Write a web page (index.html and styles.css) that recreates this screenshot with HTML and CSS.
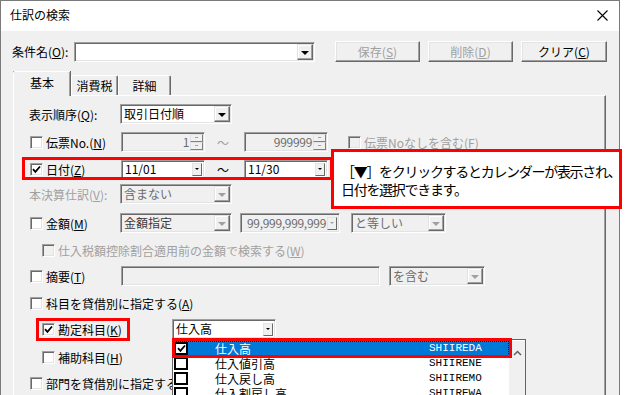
FILE: index.html
```html
<!DOCTYPE html>
<html lang="ja">
<head>
<meta charset="utf-8">
<title>仕訳の検索</title>
<link rel="stylesheet" href="styles.css">
</head>
<body>
<div class="stage">
  <div class="window">
    <div class="titlebar">
      <span class="title">仕訳の検索</span>
      <svg class="close" width="11" height="11" viewBox="0 0 11 11"><path d="M0.5 0.5 L10.5 10.5 M10.5 0.5 L0.5 10.5" stroke="#000" stroke-width="1.1" fill="none"/></svg>
    </div>
    <div class="client">
      <div class="toprow">
        <span class="cond">条件名(<u>O</u>):</span>
        <div class="sel combo"><span class="val"></span><span class="dd"><i class="tri"></i></span></div>
        <button class="btn dis first">保存(<u>S</u>)</button>
        <button class="btn dis">削除(<u>D</u>)</button>
        <button class="btn">クリア(<u>C</u>)</button>
      </div>
      <div class="tabs">
        <div class="tab active">基本</div>
        <div class="tab tab-tax">消費税</div>
        <div class="tab tab-detail">詳細</div>
      </div>
      <div class="panel">
        <div class="row r1">
          <div class="lbl">表示順序(<u>Q</u>):</div>
          <div class="sel w112"><span class="val">取引日付順</span><span class="dd"><i class="tri"></i></span></div>
        </div>
        <div class="row r2">
          <div class="lbl"><span class="cb"></span><span class="cbt">伝票No.(<u>N</u>)</span></div>
          <div class="fld dis w84 ml1"><span class="num">1</span><span class="spin"><i></i><i></i></span></div>
          <div class="tilde dis-t">～</div>
          <div class="fld dis w84"><span class="num">999999</span><span class="spin"><i></i><i></i></span></div>
          <div class="cbwrap ml19"><span class="cb dis"></span><span class="cbt dis-t">伝票Noなしを含む(<u>F</u>)</span></div>
        </div>
        <div class="row r3">
          <div class="lbl"><span class="cb"><svg width="9" height="9" viewBox="0 0 9 9"><path d="M1 4.2 L3.4 6.8 L8 1.5" stroke="#000" stroke-width="1.8" fill="none"/></svg></span><span class="cbt">日付(<u>Z</u>)</span></div>
          <div class="fld date w84 ml1"><span class="val">11/01</span><span class="sdd"><i class="stri"></i></span></div>
          <div class="tilde">～</div>
          <div class="fld date w84"><span class="val">11/30</span><span class="sdd"><i class="stri"></i></span></div>
        </div>
        <div class="row r4">
          <div class="lbl dis-t">本決算仕訳(<u>V</u>):</div>
          <div class="sel dis w112"><span class="val">含まない</span><span class="dd"><i class="tri"></i></span></div>
        </div>
        <div class="row r5">
          <div class="lbl"><span class="cb"></span><span class="cbt">金額(<u>M</u>)</span></div>
          <div class="sel dis w112"><span class="val dark">金額指定</span><span class="dd"><i class="tri"></i></span></div>
          <div class="fld dis w100 ml8"><span class="num">99,999,999,999</span><span class="sdd"><i class="stri"></i></span></div>
          <div class="sel dis w95 ml11"><span class="val">と等しい</span><span class="dd"><i class="tri"></i></span></div>
        </div>
        <div class="row r6">
          <div class="cbwrap ind"><span class="cb dis"></span><span class="cbt dis-t">仕入税額控除割合適用前の金額で検索する(<u>W</u>)</span></div>
        </div>
        <div class="row r7">
          <div class="lbl"><span class="cb"></span><span class="cbt">摘要(<u>T</u>)</span></div>
          <div class="fld dis w259 ml1"></div>
          <div class="sel dis w96 ml9"><span class="val">を含む</span><span class="dd"><i class="tri"></i></span></div>
        </div>
        <div class="row r8">
          <div class="cbwrap"><span class="cb"></span><span class="cbt">科目を貸借別に指定する(<u>A</u>)</span></div>
        </div>
        <div class="row r9">
          <div class="lbl lbl-wide ind"><span class="cb"><svg width="9" height="9" viewBox="0 0 9 9"><path d="M1 4.2 L3.4 6.8 L8 1.5" stroke="#000" stroke-width="1.8" fill="none"/></svg></span><span class="cbt">勘定科目(<u>K</u>)</span></div>
          <div class="fld acct w104"><span class="val">仕入高</span><span class="sdd"><i class="stri"></i></span></div>
        </div>
        <div class="row r10">
          <div class="cbwrap ind"><span class="cb"></span><span class="cbt">補助科目(<u>H</u>)</span></div>
        </div>
        <div class="row r11">
          <div class="cbwrap"><span class="cb"></span><span class="cbt">部門を貸借別に指定する(<u>B</u>)</span></div>
        </div>
      </div>
    </div>
  </div>

  <div class="hl hl-tab"></div>
  <div class="hl hl-date"></div>
  <div class="callout">
    <p>［▼］をクリックするとカレンダーが表示され、</p>
    <p>日付を選択できます。</p>
  </div>
  <div class="hl hl-acct"></div>

  <div class="droplist">
    <div class="items">
      <div class="item selected"><span class="lcb"><svg width="9" height="9" viewBox="0 0 9 9"><path d="M1 4.2 L3.4 6.8 L8 1.5" stroke="#000" stroke-width="1.8" fill="none"/></svg></span><span class="iname">仕入高</span><span class="icode">SHIIREDA</span></div>
      <div class="item"><span class="lcb"></span><span class="iname">仕入値引高</span><span class="icode">SHIIRENE</span></div>
      <div class="item"><span class="lcb"></span><span class="iname">仕入戻し高</span><span class="icode">SHIIREMO</span></div>
      <div class="item"><span class="lcb"></span><span class="iname">仕入割戻し高</span><span class="icode">SHIIREWA</span></div>
    </div>
    <div class="vscroll"><svg width="9" height="6" viewBox="0 0 9 6"><path d="M1 5 L4.5 1.5 L8 5" stroke="#606060" stroke-width="1.5" fill="none"/></svg></div>
  </div>
  <div class="hl hl-row"></div>
</div>
</body>
</html>
```

FILE: styles.css
```css
* { box-sizing: border-box; }
html, body { margin: 0; padding: 0; }
body {
  width: 627px;
  height: 395px;
  overflow: hidden;
  background: #fff;
  font-family: "Noto Sans CJK JP", "Noto Sans", sans-serif;
  font-size: 12px;
  color: #000;
}
u { text-decoration: underline; text-underline-offset: 1px; }
p { margin: 0; }

.stage { position: relative; width: 627px; height: 395px; overflow: hidden; }

.window {
  width: 620px;
  height: 400px;
  border: 1px solid #7a7a7a;
  background: #f0f0f0;
}

.titlebar {
  height: 30px;
  background: #fff;
  display: flex;
  align-items: center;
  justify-content: space-between;
  padding: 0 11px 2px 9px;
}
.title { line-height: 14px; }
.close { display: block; }

.client { padding: 10px 0 0 11px; }

.toprow { display: flex; align-items: center; height: 21px; }
.cond { width: 62px; white-space: nowrap; }

.btn {
  font: inherit;
  height: 21px;
  width: 85px;
  margin: 0 0 0 8px;
  padding: 0;
  background: #f0f0f0;
  border: 1px solid;
  border-color: #fff #696969 #696969 #fff;
  box-shadow: inset -1px -1px 0 #a0a0a0, inset 1px 1px 0 #e3e3e3;
  color: #000;
  line-height: 17px;
}
.btn.first { margin-left: 20px; }
.btn.dis { color: #a0a0a0; }
.btn:last-child { width: 86px; }

/* sunken edit / select boxes */
.sel, .fld {
  display: flex;
  align-items: center;
  height: 20px;
  background: #fff;
  border: 1px solid;
  border-color: #a0a0a0 #fff #fff #a0a0a0;
  box-shadow: inset 1px 1px 0 #696969, inset -1px -1px 0 #e3e3e3;
  padding: 1px 1px 1px 3px;
  flex: none;
}
.sel.dis, .fld.dis { background: #f0f0f0; }
.combo { width: 241px; margin-top: 1px; }
.val { flex: 1; white-space: nowrap; overflow: hidden; line-height: 16px; }
.sel.dis .val { color: #6d6d6d; }
.sel.dis .val.dark { color: #3a3a3a; }
.num { flex: 1; text-align: right; color: #6d6d6d; white-space: nowrap; line-height: 16px; padding-right: 1px; letter-spacing: -0.3px; }

.dd {
  width: 16px;
  height: 16px;
  flex: none;
  display: flex;
  align-items: center;
  justify-content: center;
  background: #f0f0f0;
  border: 1px solid;
  border-color: #e3e3e3 #696969 #696969 #e3e3e3;
  box-shadow: inset -1px -1px 0 #a0a0a0, inset 1px 1px 0 #fff;
}
.tri {
  display: block;
  width: 0; height: 0;
  border-left: 4px solid transparent;
  border-right: 4px solid transparent;
  border-top: 4px solid #000;
  margin-top: 1px;
}
.sel.dis .tri { border-top-color: #a0a0a0; }

.sdd {
  width: 10px;
  height: 13px;
  flex: none;
  display: flex;
  align-items: center;
  justify-content: center;
  background: #f0f0f0;
  border: 1px solid;
  border-color: #e3e3e3 #696969 #696969 #e3e3e3;
  margin-right: 1px;
}
.stri {
  display: block;
  width: 0; height: 0;
  border-left: 2px solid transparent;
  border-right: 2px solid transparent;
  border-top: 2px solid #000;
}
.fld.dis .stri { border-top-color: #a0a0a0; }

.spin {
  width: 13px;
  height: 16px;
  flex: none;
  display: flex;
  flex-direction: column;
}
.spin i {
  flex: 1;
  display: flex;
  background: #f0f0f0;
  border: 1px solid;
  border-color: #e3e3e3 #808080 #808080 #e3e3e3;
  position: relative;
}
.spin i::after {
  content: "";
  position: absolute;
  left: 4px; top: 2px;
  width: 3px; height: 1px;
  background: #a0a0a0;
}

.date { height: 19px; }
.acct { height: 20px; }

.w84 { width: 84px; }
.w100 { width: 100px; }
.w95 { width: 95px; }
.w96 { width: 96px; }
.w104 { width: 104px; }
.w112 { width: 112px; }
.w259 { width: 259px; }
.ml1 { margin-left: 1px; }
.ml8 { margin-left: 8px; }
.ml9 { margin-left: 9px; }
.ml11 { margin-left: 11px; }
.ml19 { margin-left: 19px; }

/* tabs */
.tabs {
  display: flex;
  align-items: flex-end;
  height: 25px;
  margin: 9px 0 -1px 1px;
  position: relative;
  z-index: 1;
}
.tab {
  height: 20px;
  margin-bottom: 1px;
  border-top: 1px solid #fff;
  border-left: 1px solid #fff;
  border-right: 1px solid #696969;
  box-shadow: inset -1px 0 0 #a0a0a0;
  border-radius: 2px 2px 0 0;
  background: #f0f0f0;
  display: flex;
  justify-content: center;
  align-items: center;
  padding-bottom: 1px;
}
.tab.active { width: 58px; height: 25px; margin-bottom: 0; padding-bottom: 4px; }
.tab-tax { width: 47px; }
.tab-detail { width: 53px; }

.panel {
  margin-left: 1px;
  width: 593px;
  height: 310px;
  border-top: 1px solid #fff;
  border-left: 1px solid #fff;
  border-right: 1px solid #696969;
  box-shadow: inset -1px 0 0 #a0a0a0;
  padding: 8px 0 0 15px;
}

.row { display: flex; align-items: center; height: 20px; }
.r2 { margin-top: 8px; }
.r3 { margin-top: 7px; }
.r4 { margin-top: 5px; }
.r5 { margin-top: 9px; }
.r6 { margin-top: 7px; }
.r7 { margin-top: 6px; }
.r8 { margin-top: 7px; }
.r9 { margin-top: 6px; }
.r10 { margin-top: 8px; }
.r11 { margin-top: 6px; }

.lbl { width: 91px; flex: none; display: flex; align-items: center; white-space: nowrap; }
.lbl-wide { width: 143px; }
.cbwrap { display: flex; align-items: center; white-space: nowrap; }
.ind { padding-left: 12px; }

.cb {
  width: 13px;
  height: 13px;
  flex: none;
  margin-left: 1px;
  background: #fff;
  border: 1px solid;
  border-color: #a0a0a0 #fff #fff #a0a0a0;
  box-shadow: inset 1px 1px 0 #696969, inset -1px -1px 0 #e3e3e3;
  display: flex;
  align-items: center;
  justify-content: center;
}
.cb svg { display: block; }
.cb.dis { background: #f0f0f0; }
.cbt { margin-left: 3px; }
.dis-t { color: #a0a0a0; }

.tilde { width: 39px; flex: none; text-align: center; padding-right: 3px; }

/* annotations */
.hl { position: absolute; border: 3px solid #f00; }
.hl-tab { left: 13px; top: 71px; width: 58px; height: 24px; }
.hl-date { left: 22px; top: 157px; width: 311px; height: 23px; }
.hl-acct { left: 36px; top: 318px; width: 94px; height: 23px; }
.hl-row { left: 172px; top: 338px; width: 340px; height: 20px; }

.callout {
  position: absolute;
  left: 331px;
  top: 149px;
  width: 291px;
  height: 60px;
  background: #fff;
  border: 3px solid #f00;
  padding: 10px 0 0 7px;
  font-size: 14px;
  line-height: 18px;
  letter-spacing: -1.3px;
  white-space: nowrap;
}

/* dropdown list */
.droplist {
  position: absolute;
  left: 172px;
  top: 339px;
  width: 354px;
  height: 70px;
  border: 1px solid #646464;
  background: #fff;
  display: flex;
  padding-top: 1px;
}
.items { width: 336px; flex: none; }
.item { height: 15px; display: flex; align-items: center; padding-left: 1px; overflow: hidden; }
.item.selected {
  background: #0078d7;
  color: #fff;
  outline: 1px dotted #000;
  outline-offset: -1px;
}
.lcb {
  width: 14px;
  height: 13px;
  flex: none;
  border: 2px solid #000;
  background: #fff;
  display: flex;
  align-items: center;
  justify-content: center;
}
.iname { width: 241px; flex: none; padding-left: 27px; white-space: nowrap; line-height: 15px; }
.icode { font-family: "Liberation Mono", "DejaVu Sans Mono", monospace; font-size: 11px; line-height: 15px; }
.vscroll {
  flex: 1;
  background: #f0f0f0;
  display: flex;
  justify-content: center;
  padding-top: 9px;
}
.vscroll svg { display: block; }
```
